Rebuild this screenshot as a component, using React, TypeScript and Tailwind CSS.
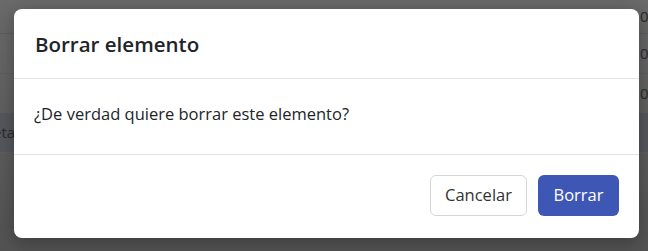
export default function App() {
  const rows = [
    { h: 'h-[34px]', band: false },
    { h: 'h-[40px]', band: false },
    { h: 'h-[39px]', band: false },
    { h: 'h-[40px]', band: true },
  ];

  return (
    <div className="relative h-[251px] w-[648px] overflow-hidden bg-[#5c5c5c] font-['Open_Sans',sans-serif]">
      {/* page behind the backdrop */}
      <div className="absolute inset-0 flex flex-col bg-gradient-to-b from-[#6a6a6a] to-[#525252]" aria-hidden="true">
        {rows.map((row, i) => (
          <div
            key={i}
            className={`flex ${row.h} items-center justify-between border-b border-[#5e5e5e] ${row.band ? 'bg-[#55575c]' : ''}`}
          >
            <span className="-ml-[7px] text-[15px] text-[#2a2a2a]">{row.band ? 'eta' : ''}</span>
            <span className="-mr-[6px] text-[15px] text-[#2a2a2a]">{row.band ? '' : '0/'}</span>
          </div>
        ))}
      </div>

      <div className="relative pl-[14px] pt-[9px]">
        <div className="flex h-[229px] w-[625px] flex-col rounded-[8px] bg-white shadow-[0_4px_18px_rgba(0,0,0,0.3)]">
          <div className="flex h-[70px] items-center border-b border-[#e3e3e3] px-[21px]">
            <h2 className="pt-[2px] text-[20.5px] font-semibold text-[#212529]">Borrar elemento</h2>
          </div>
          <div className="flex h-[76px] items-center border-b border-[#e3e3e3] px-[20px] pb-[5px]">
            <p className="text-[16.5px] text-[#212529]">¿De verdad quiere borrar este elemento?</p>
          </div>
          <div className="flex flex-1 items-start justify-end gap-[11px] pr-[20px] pt-[20px]">
            <button className="h-[41px] w-[97px] rounded-[6px] border border-[#d3d6da] bg-white text-[16.5px] text-[#333]">
              Cancelar
            </button>
            <button className="h-[41px] w-[81px] rounded-[6px] bg-[#3f57b4] text-[16.5px] text-white">
              Borrar
            </button>
          </div>
        </div>
      </div>
    </div>
  );
}
